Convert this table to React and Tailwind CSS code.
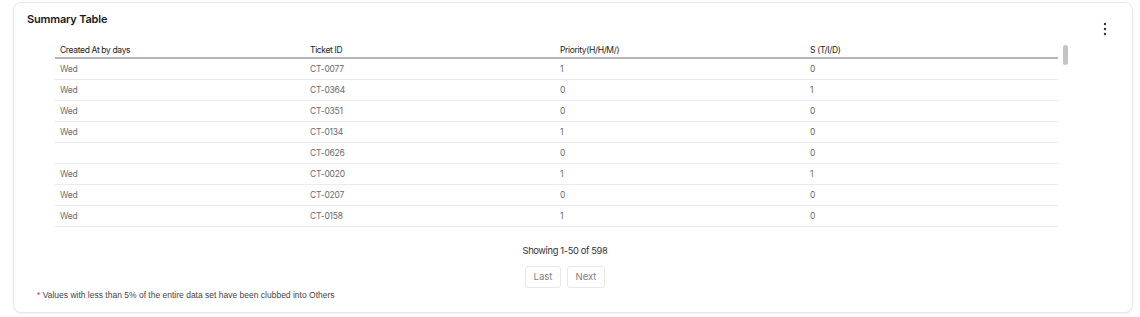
import React from "react";

const rows = [
  { day: "Wed", id: "CT-0077", p: "1", s: "0" },
  { day: "Wed", id: "CT-0364", p: "0", s: "1" },
  { day: "Wed", id: "CT-0351", p: "0", s: "0" },
  { day: "Wed", id: "CT-0134", p: "1", s: "0" },
  { day: "", id: "CT-0626", p: "0", s: "0" },
  { day: "Wed", id: "CT-0020", p: "1", s: "1" },
  { day: "Wed", id: "CT-0207", p: "0", s: "0" },
  { day: "Wed", id: "CT-0158", p: "1", s: "0" },
];

const cols = ["Created At by days", "Ticket ID", "Priority(H/H/M/)", "S (T/I/D)"];

export default function App() {
  return (
    <div className="w-[1140px] h-[317px] bg-white pt-[2px] pl-[13px]" style={{ fontFamily: "Inter, 'Liberation Sans', sans-serif" }}>
      <div className="relative flex flex-col w-[1120px] h-[311px] rounded-lg border border-[#e6e8ec] shadow-[0_1px_2px_rgba(0,0,0,0.06)] bg-white">
        <div className="flex items-start justify-between pl-[13px] pr-[24px] pt-[9px]">
          <h2 className="text-[11px] leading-[14px] font-semibold tracking-[-0.2px] text-[#1a1a1a]">Summary Table</h2>
          <svg width="6" height="14" viewBox="0 0 6 14" className="mt-[10px]" fill="#333">
            <circle cx="3" cy="2" r="1.2" />
            <circle cx="3" cy="7" r="1.2" />
            <circle cx="3" cy="12" r="1.2" />
          </svg>
        </div>

        <div className="ml-[41px] w-[1020px]">
          <div className="relative mt-[5px] h-[188px] overflow-hidden">
            <div className="w-[1003px]">
              <div className="grid grid-cols-[250px_250px_250px_253px] h-[18px] items-center border-b-[2px] border-[#b5b5b5] text-[8.5px] tracking-[-0.35px] text-[#222]">
                {cols.map((c) => (
                  <div key={c} className="pl-[5px] leading-[12px] pt-[1px]">{c}</div>
                ))}
              </div>
              {rows.map((r) => (
                <div key={r.id} className="grid grid-cols-[250px_250px_250px_253px] h-[21px] items-center border-b border-[#ebebeb] text-[8.5px] tracking-[-0.2px] text-[#6b6b6b]">
                  <div className="pl-[5px]">{r.day}</div>
                  <div className="pl-[5px]">{r.id}</div>
                  <div className="pl-[5px]">{r.p}</div>
                  <div className="pl-[5px]">{r.s}</div>
                </div>
              ))}
            </div>
            <div className="absolute left-[1008px] top-[4px] w-[5px] h-[20px] rounded-full bg-[#c4c4c4]" />
          </div>

          <div className="flex flex-col items-center mt-[16px]">
            <p className="text-[9.3px] leading-[12px] tracking-[-0.35px] text-[#333]">Showing 1-50 of 598</p>
            <div className="flex gap-[6px] mt-[9px]">
              <button className="w-[36px] h-[22px] rounded-[3px] border border-[#e8e8e8] text-[9.5px] text-[#808080] bg-white">Last</button>
              <button className="w-[38px] h-[22px] rounded-[3px] border border-[#e8e8e8] text-[9.5px] text-[#808080] bg-white">Next</button>
            </div>
          </div>
        </div>

        <p className="pl-[23px] mt-[2px] text-[8.5px] leading-[10px] text-[#444]" style={{ fontFamily: "'Liberation Sans', Arial, sans-serif" }}>
          <span className="text-[#e03131]">*</span> Values with less than 5% of the entire data set have been clubbed into Others
        </p>
      </div>
    </div>
  );
}
